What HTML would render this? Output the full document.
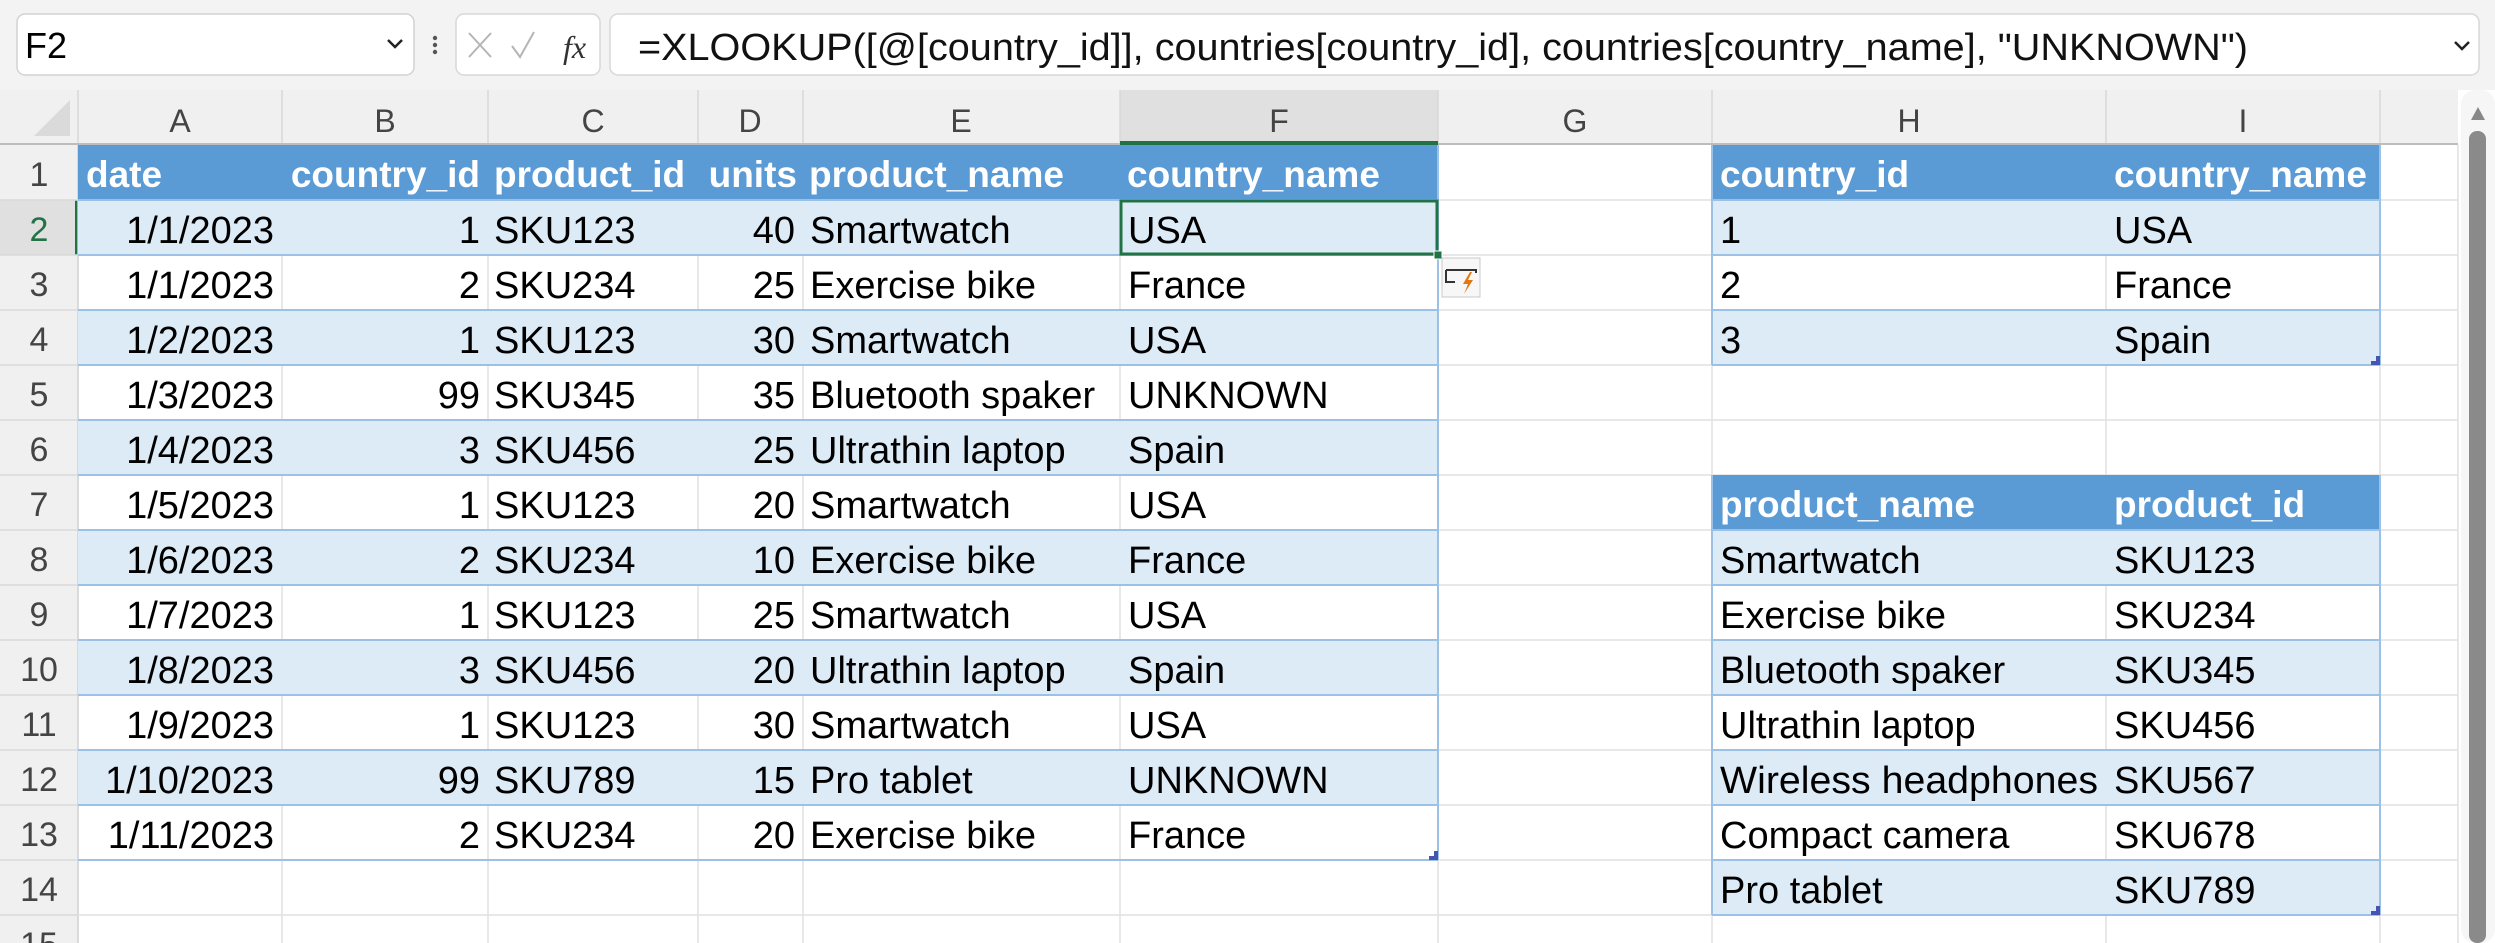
<!DOCTYPE html>
<html><head><meta charset="utf-8"><style>
html,body{margin:0;padding:0;background:#fff;}
svg{display:block;font-family:"Liberation Sans",sans-serif;}
.h{font-weight:bold;fill:#fff;font-size:37px;}
.c{font-size:38px;fill:#000;}
.ch{font-size:32px;fill:#444;text-anchor:middle;}
.rh{font-size:34px;fill:#444;text-anchor:middle;}
.r{text-anchor:end;}
</style></head><body>
<svg width="2495" height="943" viewBox="0 0 2495 943" xmlns="http://www.w3.org/2000/svg">
<rect x="0" y="0" width="2495" height="90" fill="#f3f3f3"/>
<rect x="17" y="14" width="397" height="61" rx="8" fill="#fff" stroke="#d2d2d2" stroke-width="1.5"/>
<text x="25" y="58" font-size="36" fill="#000">F2</text>
<path d="M388 40 l7 7 l7 -7" fill="none" stroke="#222" stroke-width="2.5"/>
<circle cx="435" cy="38" r="2.2" fill="#555"/><circle cx="435" cy="45" r="2.2" fill="#555"/><circle cx="435" cy="52" r="2.2" fill="#555"/>
<rect x="456" y="14" width="144" height="61" rx="8" fill="#fff" stroke="#d8d8d8" stroke-width="1.5"/>
<path d="M469 33 l22 24 M491 33 l-22 24" stroke="#b5b5b5" stroke-width="2"/>
<path d="M512 46 l8 11 l14 -25" fill="none" stroke="#b5b5b5" stroke-width="2"/>
<text x="563" y="58" font-size="32" font-style="italic" font-family="Liberation Serif,serif" fill="#333">fx</text>
<rect x="610" y="14" width="1869" height="61" rx="8" fill="#fff" stroke="#d8d8d8" stroke-width="1.5"/>
<text x="638" y="60" font-size="38" fill="#111" textLength="1610" lengthAdjust="spacingAndGlyphs">=XLOOKUP([@[country_id]], countries[country_id], countries[country_name], "UNKNOWN")</text>
<path d="M2455 42 l7 7 l7 -7" fill="none" stroke="#222" stroke-width="2.5"/>

<rect x="0" y="90" width="2458" height="55" fill="#f0f0f0"/>
<rect x="1120" y="90" width="318" height="55" fill="#e0e0e0"/>
<path d="M70 100 L70 136 L34 136 Z" fill="#dadada"/>
<g stroke="#d9d9d9" stroke-width="1.5">
<line x1="78" y1="90" x2="78" y2="145"/><line x1="282" y1="90" x2="282" y2="145"/><line x1="488" y1="90" x2="488" y2="145"/><line x1="698" y1="90" x2="698" y2="145"/><line x1="803" y1="90" x2="803" y2="145"/><line x1="1120" y1="90" x2="1120" y2="145"/><line x1="1438" y1="90" x2="1438" y2="145"/><line x1="1712" y1="90" x2="1712" y2="145"/><line x1="2106" y1="90" x2="2106" y2="145"/><line x1="2380" y1="90" x2="2380" y2="145"/>
</g>
<line x1="0" y1="144" x2="2458" y2="144" stroke="#bdbdbd" stroke-width="2"/>
<rect x="1120" y="141" width="318" height="4" fill="#217346"/>
<text class="ch" x="180" y="132">A</text><text class="ch" x="385" y="132">B</text><text class="ch" x="593" y="132">C</text><text class="ch" x="750" y="132">D</text><text class="ch" x="961" y="132">E</text><text class="ch" x="1279" y="132">F</text><text class="ch" x="1575" y="132">G</text><text class="ch" x="1909" y="132">H</text><text class="ch" x="2243" y="132">I</text>

<rect x="0" y="145" width="78" height="798" fill="#f0f0f0"/>
<rect x="0" y="200" width="78" height="55" fill="#e0e0e0"/>
<rect x="75" y="200" width="3" height="55" fill="#217346"/>
<line x1="78" y1="145" x2="78" y2="943" stroke="#d0d0d0" stroke-width="1.5"/>
<g stroke="#d9d9d9" stroke-width="1.5">
<line x1="0" y1="200" x2="78" y2="200"/><line x1="0" y1="255" x2="78" y2="255"/><line x1="0" y1="310" x2="78" y2="310"/><line x1="0" y1="365" x2="78" y2="365"/><line x1="0" y1="420" x2="78" y2="420"/><line x1="0" y1="475" x2="78" y2="475"/><line x1="0" y1="530" x2="78" y2="530"/><line x1="0" y1="585" x2="78" y2="585"/><line x1="0" y1="640" x2="78" y2="640"/><line x1="0" y1="695" x2="78" y2="695"/><line x1="0" y1="750" x2="78" y2="750"/><line x1="0" y1="805" x2="78" y2="805"/><line x1="0" y1="860" x2="78" y2="860"/><line x1="0" y1="915" x2="78" y2="915"/>
</g>
<text class="rh" x="39" y="186">1</text><text class="rh" x="39" y="241" style="fill:#217346">2</text><text class="rh" x="39" y="296">3</text><text class="rh" x="39" y="351">4</text><text class="rh" x="39" y="406">5</text><text class="rh" x="39" y="461">6</text><text class="rh" x="39" y="516">7</text><text class="rh" x="39" y="571">8</text><text class="rh" x="39" y="626">9</text><text class="rh" x="39" y="681">10</text><text class="rh" x="39" y="736">11</text><text class="rh" x="39" y="791">12</text><text class="rh" x="39" y="846">13</text><text class="rh" x="39" y="901">14</text><text class="rh" x="39" y="956">15</text>

<g stroke="#e1e1e1" stroke-width="1.5">
<line x1="282" y1="145" x2="282" y2="943"/><line x1="488" y1="145" x2="488" y2="943"/><line x1="698" y1="145" x2="698" y2="943"/><line x1="803" y1="145" x2="803" y2="943"/><line x1="1120" y1="145" x2="1120" y2="943"/><line x1="1438" y1="145" x2="1438" y2="943"/><line x1="1712" y1="145" x2="1712" y2="943"/><line x1="2106" y1="145" x2="2106" y2="943"/><line x1="2380" y1="145" x2="2380" y2="943"/><line x1="2458" y1="145" x2="2458" y2="943"/>
<line x1="78" y1="200" x2="2458" y2="200"/><line x1="78" y1="255" x2="2458" y2="255"/><line x1="78" y1="310" x2="2458" y2="310"/><line x1="78" y1="365" x2="2458" y2="365"/><line x1="78" y1="420" x2="2458" y2="420"/><line x1="78" y1="475" x2="2458" y2="475"/><line x1="78" y1="530" x2="2458" y2="530"/><line x1="78" y1="585" x2="2458" y2="585"/><line x1="78" y1="640" x2="2458" y2="640"/><line x1="78" y1="695" x2="2458" y2="695"/><line x1="78" y1="750" x2="2458" y2="750"/><line x1="78" y1="805" x2="2458" y2="805"/><line x1="78" y1="860" x2="2458" y2="860"/><line x1="78" y1="915" x2="2458" y2="915"/>
</g>

<rect x="78" y="145" width="1360" height="55" fill="#5b9bd5"/>
<g fill="#ddebf7">
<rect x="78" y="200" width="1360" height="55"/><rect x="78" y="310" width="1360" height="55"/><rect x="78" y="420" width="1360" height="55"/><rect x="78" y="530" width="1360" height="55"/><rect x="78" y="640" width="1360" height="55"/><rect x="78" y="750" width="1360" height="55"/>
</g>
<rect x="1712" y="145" width="668" height="55" fill="#5b9bd5"/>
<rect x="1712" y="475" width="668" height="55" fill="#5b9bd5"/>
<g fill="#ddebf7">
<rect x="1712" y="200" width="668" height="55"/><rect x="1712" y="310" width="668" height="55"/>
<rect x="1712" y="530" width="668" height="55"/><rect x="1712" y="640" width="668" height="55"/><rect x="1712" y="750" width="668" height="55"/><rect x="1712" y="860" width="668" height="55"/>
</g>
<g stroke="#9bc2e6" stroke-width="2">
<line x1="78" y1="200" x2="1438" y2="200"/><line x1="78" y1="255" x2="1438" y2="255"/><line x1="78" y1="310" x2="1438" y2="310"/><line x1="78" y1="365" x2="1438" y2="365"/><line x1="78" y1="420" x2="1438" y2="420"/><line x1="78" y1="475" x2="1438" y2="475"/><line x1="78" y1="530" x2="1438" y2="530"/><line x1="78" y1="585" x2="1438" y2="585"/><line x1="78" y1="640" x2="1438" y2="640"/><line x1="78" y1="695" x2="1438" y2="695"/><line x1="78" y1="750" x2="1438" y2="750"/><line x1="78" y1="805" x2="1438" y2="805"/><line x1="78" y1="860" x2="1438" y2="860"/>
<line x1="1438" y1="145" x2="1438" y2="860"/>
<line x1="1712" y1="200" x2="2380" y2="200"/><line x1="1712" y1="255" x2="2380" y2="255"/><line x1="1712" y1="310" x2="2380" y2="310"/><line x1="1712" y1="365" x2="2380" y2="365"/>
<line x1="1712" y1="145" x2="1712" y2="365"/><line x1="2380" y1="145" x2="2380" y2="365"/>
<line x1="1712" y1="530" x2="2380" y2="530"/><line x1="1712" y1="585" x2="2380" y2="585"/><line x1="1712" y1="640" x2="2380" y2="640"/><line x1="1712" y1="695" x2="2380" y2="695"/><line x1="1712" y1="750" x2="2380" y2="750"/><line x1="1712" y1="805" x2="2380" y2="805"/><line x1="1712" y1="860" x2="2380" y2="860"/><line x1="1712" y1="915" x2="2380" y2="915"/>
<line x1="1712" y1="475" x2="1712" y2="915"/><line x1="2380" y1="475" x2="2380" y2="915"/>
</g>

<text class="h" x="86" y="187">date</text>
<text class="h r" x="480" y="187">country_id</text>
<text class="h" x="494" y="187">product_id</text>
<text class="h r" x="797" y="187">units</text>
<text class="h" x="809" y="187">product_name</text>
<text class="h" x="1127" y="187">country_name</text>
<text class="h" x="1720" y="187">country_id</text>
<text class="h" x="2114" y="187">country_name</text>
<text class="h" x="1720" y="517">product_name</text>
<text class="h" x="2114" y="517">product_id</text>

<g class="c">
<text class="r" x="274" y="243">1/1/2023</text><text class="r" x="480" y="243">1</text><text x="494" y="243">SKU123</text><text class="r" x="795" y="243">40</text><text x="810" y="243">Smartwatch</text><text x="1128" y="243">USA</text>
<text class="r" x="274" y="298">1/1/2023</text><text class="r" x="480" y="298">2</text><text x="494" y="298">SKU234</text><text class="r" x="795" y="298">25</text><text x="810" y="298">Exercise bike</text><text x="1128" y="298">France</text>
<text class="r" x="274" y="353">1/2/2023</text><text class="r" x="480" y="353">1</text><text x="494" y="353">SKU123</text><text class="r" x="795" y="353">30</text><text x="810" y="353">Smartwatch</text><text x="1128" y="353">USA</text>
<text class="r" x="274" y="408">1/3/2023</text><text class="r" x="480" y="408">99</text><text x="494" y="408">SKU345</text><text class="r" x="795" y="408">35</text><text x="810" y="408">Bluetooth spaker</text><text x="1128" y="408">UNKNOWN</text>
<text class="r" x="274" y="463">1/4/2023</text><text class="r" x="480" y="463">3</text><text x="494" y="463">SKU456</text><text class="r" x="795" y="463">25</text><text x="810" y="463">Ultrathin laptop</text><text x="1128" y="463">Spain</text>
<text class="r" x="274" y="518">1/5/2023</text><text class="r" x="480" y="518">1</text><text x="494" y="518">SKU123</text><text class="r" x="795" y="518">20</text><text x="810" y="518">Smartwatch</text><text x="1128" y="518">USA</text>
<text class="r" x="274" y="573">1/6/2023</text><text class="r" x="480" y="573">2</text><text x="494" y="573">SKU234</text><text class="r" x="795" y="573">10</text><text x="810" y="573">Exercise bike</text><text x="1128" y="573">France</text>
<text class="r" x="274" y="628">1/7/2023</text><text class="r" x="480" y="628">1</text><text x="494" y="628">SKU123</text><text class="r" x="795" y="628">25</text><text x="810" y="628">Smartwatch</text><text x="1128" y="628">USA</text>
<text class="r" x="274" y="683">1/8/2023</text><text class="r" x="480" y="683">3</text><text x="494" y="683">SKU456</text><text class="r" x="795" y="683">20</text><text x="810" y="683">Ultrathin laptop</text><text x="1128" y="683">Spain</text>
<text class="r" x="274" y="738">1/9/2023</text><text class="r" x="480" y="738">1</text><text x="494" y="738">SKU123</text><text class="r" x="795" y="738">30</text><text x="810" y="738">Smartwatch</text><text x="1128" y="738">USA</text>
<text class="r" x="274" y="793">1/10/2023</text><text class="r" x="480" y="793">99</text><text x="494" y="793">SKU789</text><text class="r" x="795" y="793">15</text><text x="810" y="793">Pro tablet</text><text x="1128" y="793">UNKNOWN</text>
<text class="r" x="274" y="848">1/11/2023</text><text class="r" x="480" y="848">2</text><text x="494" y="848">SKU234</text><text class="r" x="795" y="848">20</text><text x="810" y="848">Exercise bike</text><text x="1128" y="848">France</text>
<text x="1720" y="243">1</text><text x="2114" y="243">USA</text>
<text x="1720" y="298">2</text><text x="2114" y="298">France</text>
<text x="1720" y="353">3</text><text x="2114" y="353">Spain</text>
<text x="1720" y="573">Smartwatch</text><text x="2114" y="573">SKU123</text>
<text x="1720" y="628">Exercise bike</text><text x="2114" y="628">SKU234</text>
<text x="1720" y="683">Bluetooth spaker</text><text x="2114" y="683">SKU345</text>
<text x="1720" y="738">Ultrathin laptop</text><text x="2114" y="738">SKU456</text>
<text x="1720" y="793" textLength="378" lengthAdjust="spacingAndGlyphs">Wireless headphones</text><text x="2114" y="793">SKU567</text>
<text x="1720" y="848">Compact camera</text><text x="2114" y="848">SKU678</text>
<text x="1720" y="903">Pro tablet</text><text x="2114" y="903">SKU789</text>
</g>

<path d="M1438 851 L1438 860 L1429 860 L1429 856 L1434 856 L1434 851Z" fill="#4556b0"/>
<path d="M2380 356 L2380 365 L2371 365 L2371 361 L2376 361 L2376 356Z" fill="#4556b0"/>
<path d="M2380 906 L2380 915 L2371 915 L2371 911 L2376 911 L2376 906Z" fill="#4556b0"/>

<rect x="1121" y="201" width="316" height="53" fill="none" stroke="#217346" stroke-width="3"/>
<rect x="1434" y="251" width="8" height="8" fill="#217346" stroke="#fff" stroke-width="1"/>
<rect x="1442" y="258" width="38" height="39" fill="#f7f7f7" stroke="#c8c8c8" stroke-width="1"/>
<path d="M1446 270 L1446 282 L1455 282 M1446 270 L1476 270 L1476 273" fill="none" stroke="#333" stroke-width="2"/>
<path d="M1470 272 L1463 284 L1468 284 L1464 294 L1473 280 L1468 280 L1472 272Z" fill="#e07a10"/>

<rect x="2461" y="90" width="34" height="853" rx="14" fill="#f6f6f6"/>
<path d="M2478 107 L2485 120 L2471 120Z" fill="#888"/>
<rect x="2469" y="131" width="17" height="812" rx="8" fill="#8a8a8a"/>
</svg>
</body></html>
